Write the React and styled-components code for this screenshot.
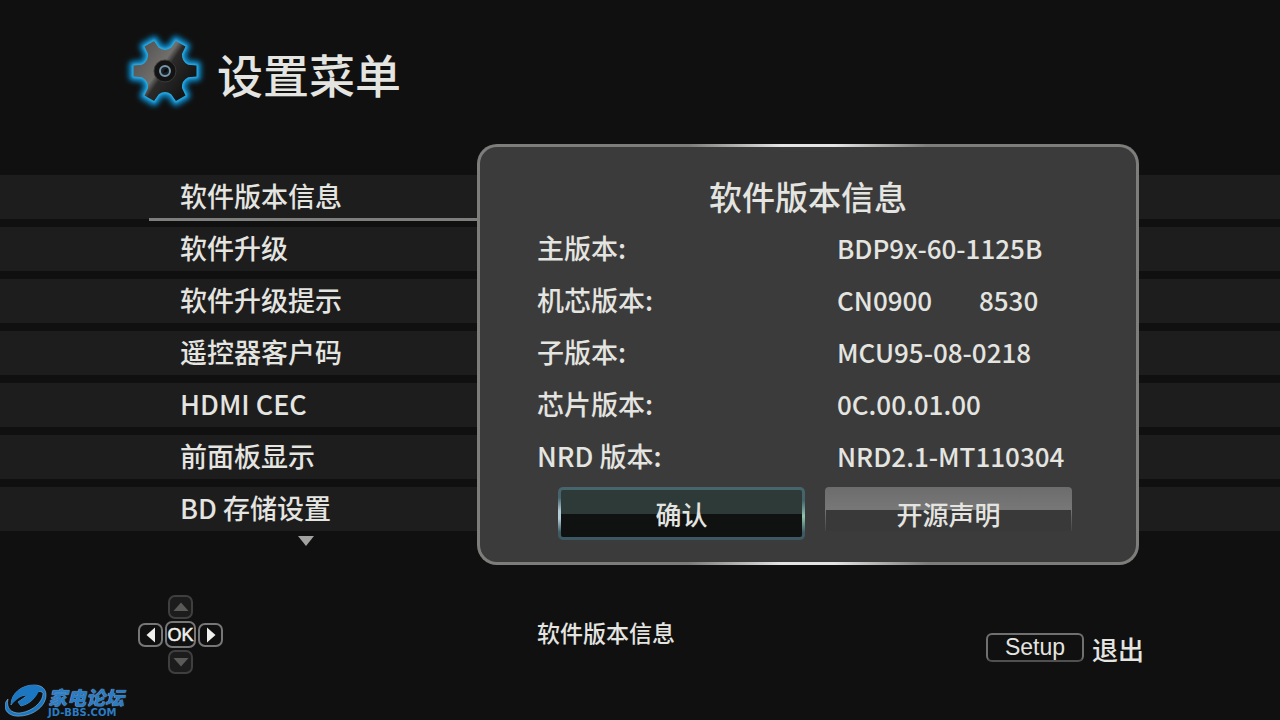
import React from "react"
import styled, { createGlobalStyle } from "styled-components"

const GlobalStyle = createGlobalStyle`
  *, *::before, *::after {
    box-sizing: border-box;
  }
  body {
    margin: 0;
    background: #101010;
    color: #e4e4e0;
    font-family: "Noto Sans CJK SC", sans-serif;
    font-size: 27px;
    font-weight: 500;
    line-height: 42px;
  }
  button {
    margin: 0;
    padding: 0;
    color: inherit;
    font: inherit;
    cursor: pointer;
  }
`

const Screen = styled.div`
  position: relative;
  display: flex;
  flex-direction: column;
  min-height: 100vh;
  overflow: hidden;
`

const Header = styled.header`
  display: flex;
  align-items: center;
  gap: 7px;
  height: 175px;
  padding: 0 120px 33px;
`

const PageTitle = styled.h1`
  margin: 0;
  padding-top: 4px;
  font-size: 46px;
  font-weight: 500;
  line-height: 56px;
`

const MenuList = styled.ul`
  display: flex;
  flex-direction: column;
  gap: 8px;
  margin: 0;
  padding: 0;
  list-style: none;
`

const MenuRow = styled.li`
  height: 44px;
  padding-left: 149px;
  background: #1d1d1d;
`

const MenuLink = styled.a`
  display: block;
  width: 330px;
  height: 46px;
  padding-left: 31px;
  border-bottom: 3px solid
    ${(props) => (props.$selected ? "#7e7e7c" : "transparent")};
  color: inherit;
  text-decoration: none;
`

const MoreButton = styled.button`
  align-self: flex-start;
  display: flex;
  margin: 5px 0 0 297px;
  border: 0;
  background: none;
`

const Dialog = styled.section`
  position: absolute;
  top: 144px;
  right: 141px;
  left: 477px;
  padding: 25px 64px 22px 57px;
  border: 3px solid transparent;
  border-radius: 20px;
  background:
    linear-gradient(#3b3b3b, #3b3b3b) padding-box,
    linear-gradient(
        90deg,
        #7d7d7b 32%,
        #e4e4e4 46%,
        #e4e4e4 54%,
        #7d7d7b 68%
      )
      border-box;
`

const DialogTitle = styled.h2`
  margin: 0 -7px 2px 0;
  font-size: 33px;
  font-weight: 500;
  line-height: 48px;
  text-align: center;
`

const InfoTable = styled.table`
  width: 100%;
  border-collapse: collapse;

  th,
  td {
    height: 52px;
    padding: 0;
    font-weight: 500;
    text-align: left;
    white-space: pre;
  }
  th {
    width: 300px;
  }
  td {
    font-size: 26px;
  }
`

const Actions = styled.div`
  display: grid;
  grid-template-columns: 1fr 1fr;
  gap: 20px;
  margin-top: 5px;
  padding-left: 21px;
`

const ActionButton = styled.button`
  height: 53px;
  border: 0;
  border-radius: 4px;
  background:
    linear-gradient(#393939, #393939) 1px 23px / calc(100% - 2px) 21px
      no-repeat,
    linear-gradient(#6c6c6c, #777 22px, #444 44px, transparent 44px);
  font-size: 26px;
`

const PrimaryButton = styled(ActionButton)`
  border: 3px solid transparent;
  border-radius: 5px;
  background:
    linear-gradient(#2d3a37 50%, #101111 50%) padding-box,
    linear-gradient(
        transparent 20%,
        #b4cbd8 45%,
        #b4cbd8 60%,
        transparent 85%
      )
      0 0 / 3px 100% no-repeat border-box,
    linear-gradient(transparent 25%, #8fc7b0 55%, transparent 85%) 100% 0 / 3px
      100% no-repeat border-box,
    linear-gradient(#46656c, #3c5962) border-box;
`

const Footer = styled.footer`
  display: grid;
  grid-template-columns: 399px 1fr auto;
  align-items: start;
  margin-top: 48px;
  padding: 0 136px 0 138px;
`

const Pad = styled.div`
  display: grid;
  grid-template-columns: 25px 31px 25px;
  grid-template-rows: 24px 27px 24px;
  grid-template-areas:
    ". up ."
    "left ok right"
    ". down .";
  gap: 2px;
  place-items: center;
`

const PadKey = styled.button`
  grid-area: ${(props) => props.$area};
  display: flex;
  align-items: center;
  justify-content: center;
  width: 25px;
  height: 24px;
  border: 2px solid ${(props) => (props.$dim ? "#3f3f3f" : "#777")};
  border-radius: 7px;
  background: ${(props) => (props.$dim ? "#1c1c1c" : "#101010")};
  color: ${(props) => (props.$dim ? "#5a5a58" : "#f0f0ec")};
`

const OkKey = styled(PadKey)`
  width: 31px;
  height: 27px;
  font-family: "Liberation Sans", sans-serif;
  font-size: 18px;
  line-height: 20px;
  -webkit-text-stroke: 0.5px currentColor;
`

const Hint = styled.p`
  margin: 0;
  padding-top: 16px;
  font-size: 23px;
`

const Exit = styled.div`
  display: flex;
  align-items: center;
  gap: 8px;
  padding-top: 33px;
  font-size: 26px;
`

const SetupButton = styled.button`
  width: 98px;
  height: 29px;
  margin-bottom: 4px;
  border: 2px solid #707070;
  border-bottom-color: #505050;
  border-radius: 6px;
  background: none;
  font-family: "Liberation Sans", sans-serif;
  font-size: 23px;
  line-height: 24px;
`

const Brand = styled.a`
  position: absolute;
  bottom: 2px;
  left: 5px;
  display: flex;
  align-items: center;
  gap: 1px;
  color: #2a7cc4;
  text-decoration: none;
`

const BrandText = styled.span`
  display: flex;
  flex-direction: column;
`

const BrandName = styled.strong`
  font-size: 19px;
  font-style: italic;
  font-weight: 900;
  line-height: 23px;
  text-shadow: 0 0 1px #b8d4ec;
`

const BrandDomain = styled.small`
  font-family: "DejaVu Sans", sans-serif;
  font-size: 10px;
  font-weight: 700;
  line-height: 9px;
`

const menuItems = [
  "软件版本信息",
  "软件升级",
  "软件升级提示",
  "遥控器客户码",
  "HDMI CEC",
  "前面板显示",
  "BD 存储设置",
]

const versions = [
  ["主版本:", "BDP9x-60-1125B"],
  ["机芯版本:", "CN0900        8530"],
  ["子版本:", "MCU95-08-0218"],
  ["芯片版本:", "0C.00.01.00"],
  ["NRD 版本:", "NRD2.1-MT110304"],
]

const polar = (radius, degrees) => {
  const angle = (degrees * Math.PI) / 180
  const x = 45 + radius * Math.cos(angle)
  const y = 45 + radius * Math.sin(angle)
  return `${x.toFixed(2)} ${y.toFixed(2)}`
}

const gearPath = [0, 60, 120, 180, 240, 300]
  .map(
    (a, i) =>
      `${i === 0 ? "M" : "L"}${polar(24, a - 15)} L${polar(32, a - 10)} ` +
      `L${polar(32, a + 10)} L${polar(24, a + 15)} ` +
      `Q${polar(19, a + 30)} ${polar(24, a + 45)}`
  )
  .join(" ")

const GearIcon = () => (
  <svg width="90" height="90" viewBox="0 0 90 90" aria-hidden="true">
    <defs>
      <linearGradient id="metal" x1="0" y1="0.1" x2="0.9" y2="0.7">
        <stop offset="0" stopColor="#4c4c4b" />
        <stop offset="0.5" stopColor="#716f6c" />
        <stop offset="0.6" stopColor="#2b2a29" />
        <stop offset="1" stopColor="#151515" />
      </linearGradient>
      <filter id="halo" x="-30%" y="-30%" width="160%" height="160%">
        <feGaussianBlur stdDeviation="2.5" />
      </filter>
      <filter id="rim" x="-30%" y="-30%" width="160%" height="160%">
        <feGaussianBlur stdDeviation="1" />
      </filter>
    </defs>
    <path
      d={gearPath}
      fill="#0b80bc"
      stroke="#0b80bc"
      strokeWidth="10"
      strokeLinejoin="round"
      filter="url(#halo)"
    />
    <path
      d={gearPath}
      fill="#2cb0e8"
      stroke="#2cb0e8"
      strokeWidth="3"
      strokeLinejoin="round"
      filter="url(#rim)"
    />
    <path d={gearPath} fill="url(#metal)" />
    <circle cx="45" cy="45" r="11" fill="#131313" />
    <circle
      cx="45"
      cy="45"
      r="11"
      fill="none"
      stroke="#3a3a3a"
      strokeWidth="1"
    />
    <circle
      cx="45"
      cy="45"
      r="5"
      fill="#18222a"
      stroke="#7897a8"
      strokeWidth="2"
    />
    <path d="M43 47 L45 43 L48 42 L47 46 Z" fill="#0a0a0a" />
  </svg>
)

const Arrow = ({ angle }) => (
  <svg width="16" height="16" viewBox="0 0 16 16" aria-hidden="true">
    <path
      d="M0.5 12 L8 3.5 L15.5 12 Z"
      fill="currentColor"
      transform={`rotate(${angle} 8 8)`}
    />
  </svg>
)

const MoreIcon = () => (
  <svg width="18" height="11" viewBox="0 0 18 11" aria-hidden="true">
    <path d="M1 0 H17 L9 10 Z" fill="#a2a2a0" />
  </svg>
)

const BrandIcon = () => (
  <svg width="42" height="34" viewBox="0 0 42 34" aria-hidden="true">
    <path
      d="M6 21 C6 9 17 1 29 1 C37 1 41 5 41 11 C41 22 29 31 16 32 C7 33 0 29 0 22 C0 19 1 17 3 15 C1 24 6 29 14 29 C26 28 38 19 38 9 C36 7 33 7 31 9 C30 15 24 20 16 22 L13 18 L23 11 C15 11 9 15 6 21 Z"
      fill="#1c77c3"
      stroke="#a8cce8"
      strokeWidth="0.5"
    />
    <path
      d="M6 21 C6 9 17 1 29 1 C34 1 37 4 33 9 C30 15 24 20 16 22 L13 18 L22 12 L20 11 C14 13 10 17 6 21 Z"
      fill="#1c77c3"
    />
  </svg>
)

const App = () => (
  <React.Fragment>
    <GlobalStyle />
    <Screen>
      <Header>
        <GearIcon />
        <PageTitle>设置菜单</PageTitle>
      </Header>
      <nav>
        <MenuList>
          {menuItems.map((item, index) => (
            <MenuRow key={item}>
              <MenuLink href="#" $selected={index === 0}>
                {item}
              </MenuLink>
            </MenuRow>
          ))}
        </MenuList>
      </nav>
      <MoreButton type="button" aria-label="更多">
        <MoreIcon />
      </MoreButton>
      <Footer>
        <Pad>
          <PadKey type="button" $area="up" $dim aria-label="上">
            <Arrow angle={0} />
          </PadKey>
          <PadKey type="button" $area="left" aria-label="左">
            <Arrow angle={270} />
          </PadKey>
          <OkKey type="button" $area="ok">
            OK
          </OkKey>
          <PadKey type="button" $area="right" aria-label="右">
            <Arrow angle={90} />
          </PadKey>
          <PadKey type="button" $area="down" $dim aria-label="下">
            <Arrow angle={180} />
          </PadKey>
        </Pad>
        <Hint>软件版本信息</Hint>
        <Exit>
          <SetupButton type="button">Setup</SetupButton>
          <span>退出</span>
        </Exit>
      </Footer>
      <Dialog role="dialog" aria-labelledby="dialog-title">
        <DialogTitle id="dialog-title">软件版本信息</DialogTitle>
        <InfoTable>
          <tbody>
            {versions.map(([label, value]) => (
              <tr key={label}>
                <th scope="row">{label}</th>
                <td>{value}</td>
              </tr>
            ))}
          </tbody>
        </InfoTable>
        <Actions>
          <PrimaryButton type="button">确认</PrimaryButton>
          <ActionButton type="button">开源声明</ActionButton>
        </Actions>
      </Dialog>
      <Brand href="#">
        <BrandIcon />
        <BrandText>
          <BrandName>家电论坛</BrandName>
          <BrandDomain>JD-BBS.COM</BrandDomain>
        </BrandText>
      </Brand>
    </Screen>
  </React.Fragment>
)

export default App
